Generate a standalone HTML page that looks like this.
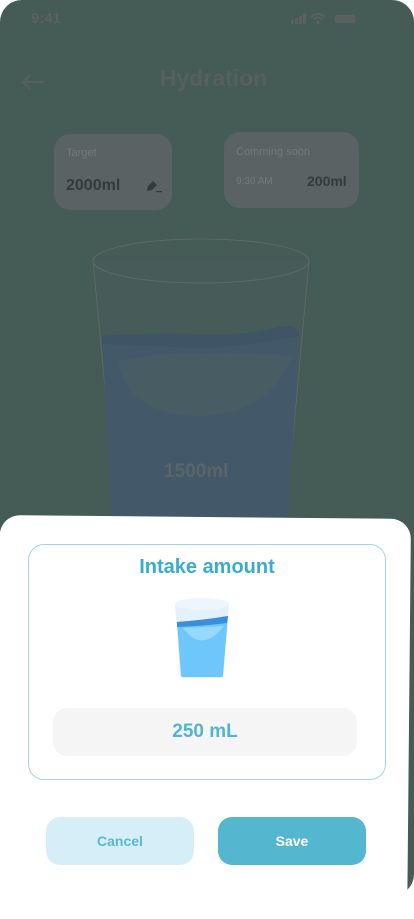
<!DOCTYPE html>
<html><head><meta charset="utf-8"><style>
*{margin:0;padding:0;box-sizing:border-box}
body{width:414px;height:896px;overflow:hidden;background:#fff;font-family:"Liberation Sans",sans-serif;position:relative}
.bg{position:absolute;left:0;top:0;width:414px;height:896px;background:#455b55;border-radius:22px}
.t{position:absolute;color:#56605e}
.card{position:absolute;background:#5a6263;border-radius:16px}
.sheet{position:absolute;left:0;top:515px;width:411px;height:400px;background:#fff;border-radius:20px;transform:rotate(0.55deg);transform-origin:0 0}
</style></head><body>
<div class="bg"></div>
<div class="t" style="left:31px;top:10px;font-size:15px;font-weight:bold;color:#5a625f">9:41</div>
<svg style="position:absolute;left:291px;top:13px" width="66" height="12"><rect x="0" y="7" width="3" height="4" fill="#5a625f"/><rect x="4" y="5" width="3" height="6" fill="#5a625f"/><rect x="8" y="3" width="3" height="8" fill="#5a625f"/><rect x="12" y="1" width="3" height="10" fill="#5a625f"/><path d="M20 4 Q27 -2 34 4 M22.5 6.5 Q27 3 31.5 6.5" stroke="#5a625f" stroke-width="2" fill="none"/><circle cx="27" cy="9.5" r="1.6" fill="#5a625f"/><rect x="44" y="2" width="20" height="8" rx="2" fill="#5a625f"/></svg>
<svg style="position:absolute;left:20px;top:74px" width="26" height="16"><path d="M24 8H3M10 1L3 8L10 15" stroke="#56605e" stroke-width="2" fill="none"/></svg>
<div class="t" style="left:0;width:427px;text-align:center;top:65px;font-size:23px;font-weight:bold">Hydration</div>
<div class="card" style="left:54px;top:134px;width:118px;height:76px"></div>
<div class="t" style="left:66px;top:147px;font-size:11px;color:#737a7a">Target</div>
<div class="t" style="left:66px;top:177px;font-size:16px;font-weight:bold;color:#353a3b">2000ml</div>
<svg style="position:absolute;left:146px;top:178px" width="16" height="16"><path d="M1 13 L2 8 L7 3 L11 7 L6 12 Z" fill="#353a3b"/><rect x="10" y="13" width="6" height="1.2" fill="#353a3b"/></svg>
<div class="card" style="left:224px;top:132px;width:135px;height:76px"></div>
<div class="t" style="left:236px;top:146px;font-size:11px;color:#737a7a">Comming soon</div>
<div class="t" style="left:236px;top:176px;font-size:10px;color:#737a7a">9:30 AM</div>
<div class="t" style="left:307px;top:173px;font-size:14px;font-weight:bold;color:#353a3b">200ml</div>
<svg style="position:absolute;left:90px;top:236px" width="222" height="290">
<path d="M3 25 L28 290 L195 290 L219 25" fill="#475c58" stroke="#5b6866" stroke-width="1"/>
<path d="M12 100 Q60 96 110 98 Q160 100 190 90 Q210 88 209 100 L198 290 L22 290 Z" fill="#43596a"/>
<path d="M12 100 Q60 96 110 98 Q160 100 190 90 Q210 88 209 100 Q150 112 110 112 Q60 110 12 108Z" fill="#3f5566"/>
<path d="M28 126 Q40 180 110 180 Q180 178 202 120 Q150 116 110 118 Q60 116 28 126Z" fill="#485c63"/>
<ellipse cx="111" cy="25" rx="108" ry="22" fill="none" stroke="#5d6a68" stroke-width="1"/>
</svg>
<div class="t" style="left:164px;top:461px;font-size:19px;font-weight:bold;color:#5a6566">1500ml</div>
<div class="sheet"></div>
<div style="position:absolute;left:28px;top:544px;width:358px;height:236px;border:1px solid #9fd6e2;border-radius:16px"></div>
<div style="position:absolute;left:0;width:414px;top:556px;text-align:center;font-size:20px;font-weight:bold;color:#38aecb">Intake amount</div>
<svg style="position:absolute;left:174px;top:596px" width="56" height="84">
<path d="M1 8 L6 80 Q6 82 9 82 L46 82 Q49 82 49 80 L55 8 Z" fill="#e4f1fd"/>
<path d="M3 26 Q30 24 54 20 L49 80 Q49 81 46 81 L9 81 Q7 81 7 79 Z" fill="#6ec6fb"/>
<path d="M3 26 Q30 24 54 20 L53 27 Q30 30 3 31Z" fill="#3b8fd9"/>
<path d="M9 32 Q28 58 50 30 Z" fill="#97d8fd"/>
<ellipse cx="28" cy="8" rx="27" ry="6" fill="#eef5fe"/>
</svg>
<div style="position:absolute;left:53px;top:708px;width:304px;height:48px;background:#f5f5f5;border-radius:14px;text-align:center;line-height:48px;font-size:19px;font-weight:bold;color:#51b5cf">250 mL</div>
<div style="position:absolute;left:46px;top:817px;width:148px;height:48px;background:#d6eef8;border-radius:14px;text-align:center;line-height:48px;font-size:14px;font-weight:bold;color:#5ab8d2">Cancel</div>
<div style="position:absolute;left:218px;top:817px;width:148px;height:48px;background:#54b6cf;border-radius:14px;text-align:center;line-height:48px;font-size:14px;font-weight:bold;color:#fff">Save</div>
</body></html>
